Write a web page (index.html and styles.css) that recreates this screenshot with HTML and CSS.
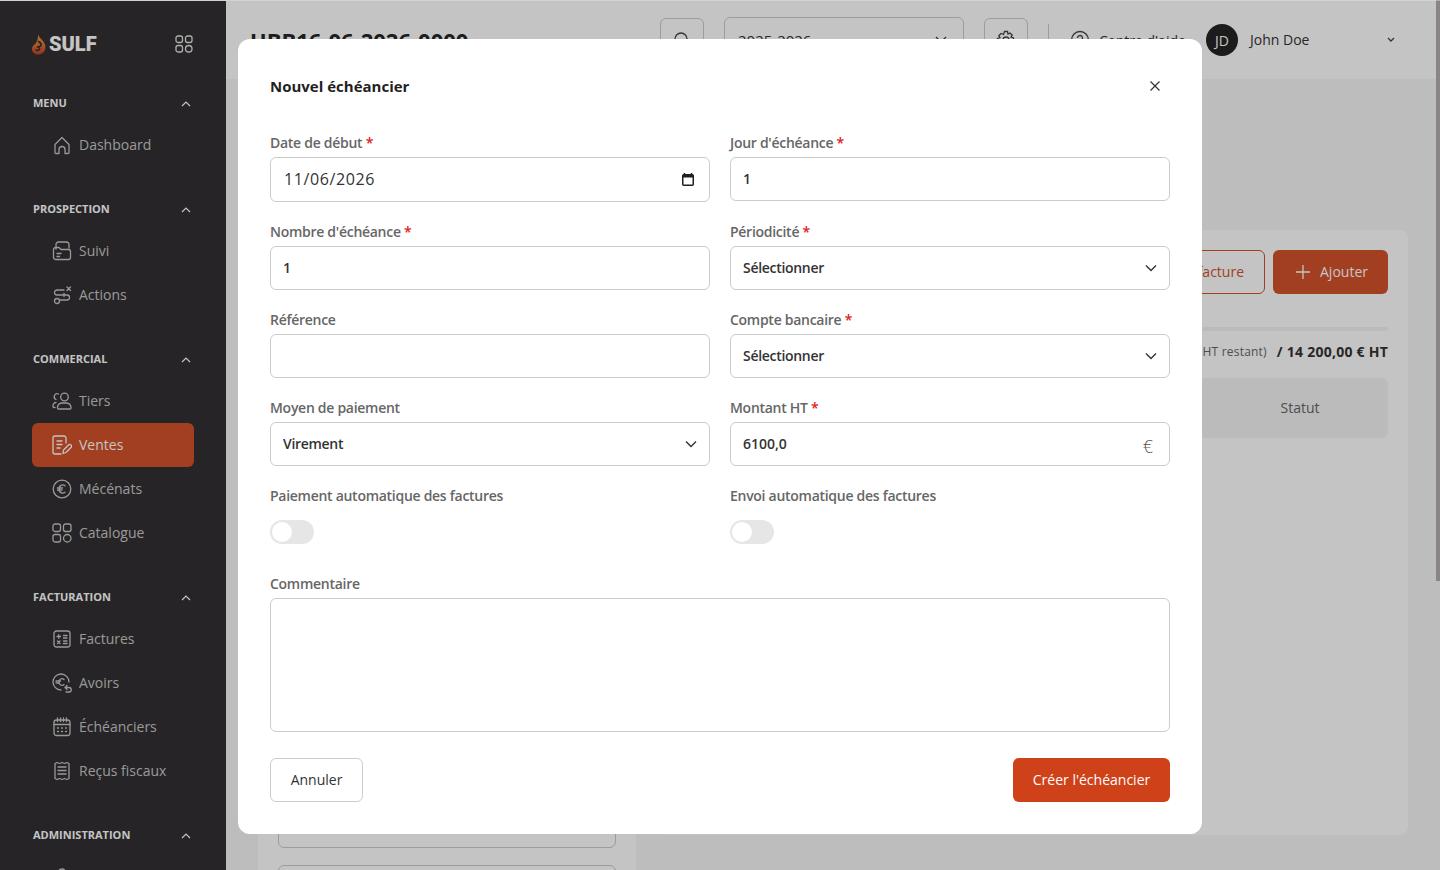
FILE: index.html
```html
<!DOCTYPE html>
<html lang="fr">
  <head>
    <meta charset="UTF-8" />
    <meta name="viewport" content="width=device-width, initial-scale=1.0" />
    <title>Nouvel échéancier</title>
    <link rel="stylesheet" href="styles.css">
  </head>
  <body>
    <div class="app">
      <aside class="sidebar">
        <div class="brand">
          <div class="logo">
            <svg width="15" height="21" viewBox="0 0 15 21">
              <defs>
                <linearGradient id="flame" x1="0" y1="0" x2="0" y2="1">
                  <stop offset="0" stop-color="#e09a3c" />
                  <stop offset="0.55" stop-color="#d9722f" />
                  <stop offset="1" stop-color="#c23f2b" />
                </linearGradient>
              </defs>
              <path d="M6 0c.5 3 3 4.500 5 7 2 2.500 3 5 2.200 8-.8 3.300-3.700 5.500-7 5.500-3.200 0-6.200-2-6.200-5.500 0-2 1-3.500 2.500-4.500C4.500 9 6.500 5 6 0z" fill="url(#flame)" />
              <path d="M6.500 7.500c2 1 3 2.500 2.500 4-.4 1.200-2 1-3 1.500 1.500.5 2 1.500 1.300 2.500-.6.800-2 1-3.300.6" fill="none" stroke="#323032" stroke-width="1.600" stroke-linecap="round" />
            </svg>
            <span>SULF</span>
          </div>
          <svg class="stroke-icon" width="18" height="18" viewBox="0 0 18 18">
            <rect x="1" y="1" width="6.500" height="6.500" rx="2" /><rect x="10.500" y="1" width="6.500" height="6.500" rx="2" />
            <rect x="1" y="10.500" width="6.500" height="6.500" rx="2" /><circle cx="13.750" cy="13.750" r="3.250" />
          </svg>
        </div>

        <div class="nav-section">
          <div class="nav-head"><span>MENU</span><svg class="caret" width="10" height="6" viewBox="0 0 10 6"><path d="M1 5l4-4 4 4" /></svg></div>
          <a class="nav-item"><svg class="stroke-icon" width="20" height="20" viewBox="0 0 20 20"><path d="M3 17.500v-8L10 2.500l7 7v8a1 1 0 0 1-1 1h-3v-4a3 3 0 0 0-6 0v4H4a1 1 0 0 1-1-1z" /></svg>Dashboard</a>
        </div>

        <div class="nav-section">
          <div class="nav-head"><span>PROSPECTION</span><svg class="caret" width="10" height="6" viewBox="0 0 10 6"><path d="M1 5l4-4 4 4" /></svg></div>
          <a class="nav-item"><svg class="stroke-icon" width="20" height="20" viewBox="0 0 20 20"><path d="M4 8V3.500A2.500 2.500 0 0 1 6.500 1h8A2.500 2.500 0 0 1 17 3.500V7M1.500 8.500A2 2 0 0 1 3.500 6.500H7l2 2h7.500a2 2 0 0 1 2 2v6a2 2 0 0 1-2 2h-13a2 2 0 0 1-2-2zM5 12.500h4M5 15.500h2.500" /></svg>Suivi</a>
          <a class="nav-item"><svg class="stroke-icon" width="20" height="20" viewBox="0 0 20 20"><path d="M12 5H5a2.500 2.500 0 0 0 0 5h10a2.500 2.500 0 0 1 0 5H8M15 2l3.500 3.500M18.500 2L15 5.500" /><circle cx="5" cy="16" r="2.500" /><path d="M12 8.500v3" /></svg>Actions</a>
        </div>

        <div class="nav-section">
          <div class="nav-head"><span>COMMERCIAL</span><svg class="caret" width="10" height="6" viewBox="0 0 10 6"><path d="M1 5l4-4 4 4" /></svg></div>
          <a class="nav-item"><svg class="stroke-icon" width="20" height="20" viewBox="0 0 20 20"><circle cx="12.500" cy="6" r="3.800" /><path d="M6.500 18a1 1 0 0 1-1-1v-1a5 5 0 0 1 5-4h4a5 5 0 0 1 4.500 4v1a1 1 0 0 1-1 1z" /><path d="M6.500 3a3 3 0 0 0-2.500 5.500M4 11.500a3 3 0 0 0-3 3v1a1 1 0 0 0 1 1h1" /></svg>Tiers</a>
          <a class="nav-item active"><svg class="stroke-icon" width="20" height="20" viewBox="0 0 20 20"><path d="M14 8V3a2 2 0 0 0-2-2H3a2 2 0 0 0-2 2v14a2 2 0 0 0 2 2h6M5 6h5M5 9.500h5M5 13h3" /><path d="M11 18.500l.5-3.500 5-5a1.500 1.500 0 0 1 2.500 2.500l-5 5z" /></svg>Ventes</a>
          <a class="nav-item"><svg class="stroke-icon" width="20" height="20" viewBox="0 0 20 20"><circle cx="10" cy="10" r="8.800" /><path d="M13 6.800a3.500 3.500 0 0 0-5.800 3.200 3.500 3.500 0 0 0 5.800 3.200M5.500 9h5M5.500 11h4.500" /></svg>Mécénats</a>
          <a class="nav-item"><svg class="stroke-icon" width="20" height="20" viewBox="0 0 20 20"><rect x="1" y="1" width="7.500" height="7.500" rx="2" /><rect x="11.500" y="1" width="7.500" height="7.500" rx="2" /><rect x="1" y="11.500" width="7.500" height="7.500" rx="2" /><circle cx="15.250" cy="15.250" r="3.750" /></svg>Catalogue</a>
        </div>

        <div class="nav-section">
          <div class="nav-head"><span>FACTURATION</span><svg class="caret" width="10" height="6" viewBox="0 0 10 6"><path d="M1 5l4-4 4 4" /></svg></div>
          <a class="nav-item"><svg class="stroke-icon" width="20" height="20" viewBox="0 0 20 20"><rect x="2" y="2" width="16" height="16" rx="2.500" /><path d="M5 7.500h3.500M6.750 5.750v3.500M11.500 6.500h3.500M11.500 9h3.500M5.500 12l2.500 2.500M8 12l-2.500 2.500M11.500 12h3.500M11.500 14.500h3.500" /></svg>Factures</a>
          <a class="nav-item"><svg class="stroke-icon" width="20" height="20" viewBox="0 0 20 20"><path d="M17 9a8 8 0 1 0-8 8M12 6.500a3 3 0 0 0-5 2.500 3 3 0 0 0 5 2.500M4 8h4.500M4 10h3.500M15 12.500l-2 2 2 2M13 14.500h4a2 2 0 0 1 0 4.500h-3" /></svg>Avoirs</a>
          <a class="nav-item"><svg class="stroke-icon" width="20" height="20" viewBox="0 0 20 20"><rect x="2" y="3" width="16" height="15.500" rx="2.500" /><path d="M2 7.500h16M5.500 1v3.500M8.500 1v3.500M11.500 1v3.500M14.500 1v3.500M5.500 11h1M9.500 11h1M13.500 11h1M5.500 14.500h1M9.500 14.500h1M13.500 14.500h1" /></svg>Échéanciers</a>
          <a class="nav-item"><svg class="stroke-icon" width="20" height="20" viewBox="0 0 20 20"><path d="M3 2.500l2 -1 2.500 1 2.500-1 2.500 1 2.500-1 2 1v15l-2 1-2.500-1-2.500 1-2.500-1-2.500 1-2-1zM6 6h8M6 9.500h8M6 13h8" /></svg>Reçus fiscaux</a>
        </div>

        <div class="nav-section">
          <div class="nav-head"><span>ADMINISTRATION</span><svg class="caret" width="10" height="6" viewBox="0 0 10 6"><path d="M1 5l4-4 4 4" /></svg></div>
          <a class="nav-item"><svg class="stroke-icon" width="20" height="20" viewBox="0 0 20 20"><circle cx="10" cy="6" r="4" /><path d="M3 18a7 7 0 0 1 14 0" /></svg></a>
        </div>
      </aside>

      <div class="content">
        <header class="topbar">
          <h1>UBB16-06-2026-0000</h1>
          <div class="topbar-right">
            <button class="icon-button"><svg class="dark-icon" width="18" height="18" viewBox="0 0 18 18"><circle cx="8" cy="8" r="6" /><path d="M13 13l4 4" /></svg></button>
            <div class="year-select"><span>2025-2026</span><svg class="dark-icon" width="12" height="8" viewBox="0 0 12 8"><path d="M1 1l5 5 5-5" /></svg></div>
            <button class="icon-button"><svg class="dark-icon" width="20" height="20" viewBox="0 0 20 20"><circle cx="10" cy="10" r="3" /><path d="M8.500 1.500h3l.5 2.500 2-1 2.200 2.200-1.200 2 2.500.8v3l-2.500.8 1.200 2-2.200 2.200-2-1-.5 2.500h-3l-.5-2.500-2 1-2.200-2.200 1.200-2L1.500 11.500v-3L4 7.700l-1.200-2L5 3.500l2.500 1z" /></svg></button>
            <div class="separator"></div>
            <div class="help"><svg class="dark-icon" width="20" height="20" viewBox="0 0 20 20"><circle cx="10" cy="10" r="8.500" /><path d="M7.500 8a2.500 2.500 0 1 1 3.500 2.300c-.7.3-1 .7-1 1.700M10 14.500v.5" /></svg>Centre d'aide</div>
            <div class="user">
              <span class="avatar">JD</span>
              <span class="user-name">John Doe</span>
              <svg class="dark-icon" width="8" height="6" viewBox="0 0 8 6"><path d="M1 1l3 3 3-3" /></svg>
            </div>
          </div>
        </header>

        <main class="page">
          <section class="side-panel">
            <div class="ghost-input"></div>
            <div class="ghost-input"></div>
          </section>
          <section class="schedule-panel">
            <div class="schedule-actions">
              <button class="btn-outline">Générer la facture</button>
              <button class="btn-fill"><svg width="16" height="16" viewBox="0 0 16 16"><path d="M8 1v14M1 8h14" /></svg>Ajouter</button>
            </div>
            <div class="progress"></div>
            <div class="totals"><span class="rest">(8 100,00 € HT restant)</span><strong>/ 14 200,00 € HT</strong></div>
            <div class="table-head"><span>Échéance</span><span>Montant HT</span><span>Statut</span></div>
          </section>
        </main>
      </div>
    </div>

    <div class="scrollbar"></div>
    <div class="backdrop"></div>

    <form class="modal">
      <div class="modal-head">
        <h2>Nouvel échéancier</h2>
        <svg class="close" width="10" height="10" viewBox="0 0 10 10"><path d="M.5.500l9 9M9.500.500l-9 9" /></svg>
      </div>

      <div class="form-grid">
        <div class="field">
          <label>Date de début <i>*</i></label>
          <div class="control">
            <input class="date-input" type="text" value="11/06/2026" />
            <svg class="date-icon" width="12" height="13" viewBox="0 0 12 13"><path d="M2.500 0v2M9.500 0v2" stroke="#1f1f1f" stroke-width="1.500" /><rect x=".75" y="1.750" width="10.500" height="10.500" rx="1" fill="none" stroke="#1f1f1f" stroke-width="1.500" /><path d="M.5 2h11v2.500H.5z" fill="#1f1f1f" /></svg>
          </div>
        </div>
        <div class="field">
          <label>Jour d'échéance <i>*</i></label>
          <input type="text" value="1" />
        </div>

        <div class="field">
          <label>Nombre d'échéance <i>*</i></label>
          <input type="text" value="1" />
        </div>
        <div class="field">
          <label>Périodicité <i>*</i></label>
          <div class="control">
            <select><option>Sélectionner</option></select>
            <svg class="select-caret" width="12" height="8" viewBox="0 0 12 8"><path d="M1 1.500l5 5 5-5" /></svg>
          </div>
        </div>

        <div class="field">
          <label>Référence</label>
          <input type="text" />
        </div>
        <div class="field">
          <label>Compte bancaire <i>*</i></label>
          <div class="control">
            <select><option>Sélectionner</option></select>
            <svg class="select-caret" width="12" height="8" viewBox="0 0 12 8"><path d="M1 1.500l5 5 5-5" /></svg>
          </div>
        </div>

        <div class="field">
          <label>Moyen de paiement</label>
          <div class="control">
            <select><option>Virement</option></select>
            <svg class="select-caret" width="12" height="8" viewBox="0 0 12 8"><path d="M1 1.500l5 5 5-5" /></svg>
          </div>
        </div>
        <div class="field">
          <label>Montant HT <i>*</i></label>
          <div class="control">
            <input type="text" value="6100,0" />
            <span class="suffix">€</span>
          </div>
        </div>

        <div class="field">
          <label>Paiement automatique des factures</label>
          <span class="toggle"><span class="knob"></span></span>
        </div>
        <div class="field">
          <label>Envoi automatique des factures</label>
          <span class="toggle"><span class="knob"></span></span>
        </div>

        <div class="field field-wide">
          <label>Commentaire</label>
          <textarea></textarea>
        </div>
      </div>

      <div class="modal-foot">
        <button type="button" class="btn-cancel">Annuler</button>
        <button type="button" class="btn-submit">Créer l'échéancier</button>
      </div>
    </form>
  </body>
</html>
```

FILE: styles.css
```css
* {
  box-sizing: border-box;
}

html,
body {
  height: 100%;
  margin: 0;
  overflow: hidden;
}

body {
  font-family: "Open Sans", "Noto Sans", sans-serif;
  font-size: 14px;
  color: #333;
  background: #d2d2da;
}

button,
input,
select,
textarea {
  font-family: inherit;
}

.app {
  display: flex;
  height: 870px;
  padding-top: 1px;
}

/* Sidebar */
.sidebar {
  width: 226px;
  flex-shrink: 0;
  background-color: #323032;
  color: #c8c8c8;
  padding: 0 32px;
  overflow: hidden;
}

.brand {
  height: 86px;
  margin-bottom: 6px;
  display: flex;
  justify-content: space-between;
  align-items: center;
}

.logo {
  display: flex;
  align-items: center;
  gap: 2px;
  font-family: "Roboto", sans-serif;
  font-size: 20px;
  font-weight: 900;
  color: #fff;
}

.stroke-icon {
  flex-shrink: 0;
  fill: none;
  stroke: currentColor;
  stroke-width: 1.300;
  stroke-linecap: round;
  stroke-linejoin: round;
}

.brand .stroke-icon {
  color: #e6e6e6;
  margin-right: 1px;
}

.nav-section {
  margin-bottom: 32px;
}

.nav-head {
  height: 20px;
  margin-bottom: 10px;
  display: flex;
  justify-content: space-between;
  align-items: center;
  padding: 0 3px 2px 1px;
  font-size: 11px;
  font-weight: 700;
  color: #fff;
}

.caret {
  margin-top: 4px;
  fill: none;
  stroke: #fff;
  stroke-width: 1.200;
}

.nav-item {
  height: 44px;
  display: flex;
  align-items: center;
  gap: 7px;
  padding: 0 0 2px 20px;
  border-radius: 6px;
  font-size: 14px;
}

.nav-item svg {
  margin-top: 2px;
}

.nav-item.active {
  background-color: #d4522c;
  color: #fff;
}

/* Page behind the dialog */
.content {
  flex: 1;
  min-width: 0;
  background-color: #f6f6f6;
  padding-right: 4px;
}

.topbar {
  height: 78px;
  background-color: #fff;
  display: flex;
  justify-content: space-between;
  align-items: center;
  padding: 0 32px 0 24px;
}

.topbar h1 {
  margin: 0;
  font-size: 22px;
  font-weight: 700;
  color: #262626;
}

.topbar-right {
  display: flex;
  align-items: center;
}

.icon-button {
  width: 44px;
  height: 44px;
  background: none;
  border: 1px solid #ccc;
  border-radius: 6px;
  display: flex;
  align-items: center;
  justify-content: center;
}

.dark-icon {
  fill: none;
  stroke: #444;
  stroke-width: 1.300;
}

.year-select {
  width: 240px;
  height: 46px;
  margin: 0 20px;
  padding: 0 16px 0 13px;
  border: 1px solid #ccc;
  border-radius: 6px;
  display: flex;
  justify-content: space-between;
  align-items: center;
  font-size: 15px;
}

.separator {
  width: 1px;
  height: 32px;
  margin: 0 20px;
  background-color: #ccc;
}

.help {
  display: flex;
  align-items: center;
  gap: 9px;
  margin-left: 1px;
  width: 136px;
}

.user {
  display: flex;
  align-items: center;
  width: 198px;
  padding-right: 9px;
}

.avatar {
  width: 32px;
  height: 32px;
  border-radius: 50%;
  background-color: #262526;
  color: #fff;
  font-size: 14px;
  display: flex;
  align-items: center;
  justify-content: center;
}

.user-name {
  flex: 1;
  margin-left: 12px;
  padding-bottom: 2px;
  color: #333;
}

.page {
  display: flex;
  gap: 20px;
  padding: 151px 28px 0 32px;
  height: 792px;
  overflow: hidden;
}

.side-panel {
  width: 378px;
  flex-shrink: 0;
  height: 700px;
  background-color: #fff;
  padding: 574px 20px 0;
  display: flex;
  flex-direction: column;
  gap: 17px;
  border-radius: 8px;
}

.ghost-input {
  height: 44px;
  flex-shrink: 0;
  border: 1px solid #ccc;
  border-radius: 6px;
}

.schedule-panel {
  flex: 1;
  height: 605px;
  background-color: #fff;
  border-radius: 8px;
  padding: 20px;
}

.schedule-actions {
  display: flex;
  justify-content: flex-end;
  gap: 8px;
}

.btn-outline,
.btn-fill {
  height: 44px;
  border-radius: 6px;
  font-size: 14px;
  padding: 0 20px 2px;
}

.btn-outline {
  background: none;
  border: 1px solid #d4522c;
  color: #d4522c;
}

.btn-fill {
  width: 115px;
  padding-left: 22px;
  background-color: #d4522c;
  border: none;
  color: #fff;
  display: flex;
  align-items: center;
  gap: 9px;
}

.btn-fill svg {
  margin-top: 2px;
  fill: none;
  stroke: #fff;
  stroke-width: 1.300;
}

.progress {
  height: 4px;
  margin-top: 33px;
  background-color: #f4f4f4;
  border-radius: 2px;
}

.totals {
  display: flex;
  justify-content: flex-end;
  align-items: center;
  gap: 10px;
  height: 20px;
  margin-top: 10px;
}

.rest {
  font-size: 12px;
  letter-spacing: 0.2px;
  color: #666;
}

.totals strong {
  font-size: 14px;
  letter-spacing: 0.25px;
  color: #333;
}

.table-head {
  height: 60px;
  margin-top: 17px;
  padding-bottom: 2px;
  background-color: #f4f4f4;
  border-radius: 6px;
  display: flex;
  justify-content: flex-end;
  align-items: center;
  color: #666;
}

.table-head span {
  width: 176px;
  text-align: center;
}

.scrollbar {
  position: fixed;
  top: 0;
  right: 0;
  width: 4px;
  height: 581px;
  background-color: #b3adad;
}

.backdrop {
  position: fixed;
  inset: 1px 0 0;
  background-color: rgba(0, 0, 0, 0.23);
}

/* Dialog */
.modal {
  position: fixed;
  top: 39px;
  left: 238px;
  width: 964px;
  height: 795px;
  background-color: #fff;
  border-radius: 12px;
  padding: 32px;
}

.modal-head {
  height: 30px;
  margin-bottom: 32px;
  display: flex;
  justify-content: space-between;
  align-items: center;
  padding-right: 10px;
}

.modal-head h2 {
  margin: 0;
  font-size: 15px;
  font-weight: 700;
  color: #1f1f1f;
}

.close {
  fill: none;
  stroke: #333;
  stroke-width: 1.200;
}

.form-grid {
  display: grid;
  grid-template-columns: 440px 440px;
  column-gap: 20px;
  row-gap: 20px;
  align-items: start;
}

.field-wide {
  grid-column: 1 / 3;
}

.field label {
  display: block;
  height: 20px;
  line-height: 20px;
  margin-bottom: 4px;
  font-size: 14px;
  font-weight: 600;
  letter-spacing: -0.28px;
  color: #666;
}

.field label i {
  font-style: normal;
  color: #e02020;
}

.control {
  position: relative;
}

input,
select,
textarea {
  display: block;
  width: 100%;
  height: 44px;
  background-color: #fff;
  border: 1px solid #ccc;
  border-radius: 6px;
  padding: 0 12px 2px;
  font-size: 14px;
  font-weight: 600;
  color: #333;
  outline: none;
}

select {
  appearance: none;
  letter-spacing: -0.3px;
}

.date-input {
  height: 45px;
  padding: 0 13px 2px;
  font-size: 16px;
  font-weight: 500;
  letter-spacing: 0.6px;
}

.date-icon {
  position: absolute;
  top: 16px;
  right: 16px;
}

.select-caret {
  position: absolute;
  top: 18px;
  right: 13px;
  fill: none;
  stroke: #333;
  stroke-width: 1.400;
}

.suffix {
  position: absolute;
  top: 14px;
  right: 17px;
  font-size: 18px;
  font-weight: 300;
  line-height: 20px;
  color: #555;
}

.toggle {
  display: block;
  width: 44px;
  height: 24px;
  margin: 14px 0 10px;
  padding: 2px;
  background-color: #e6e6e6;
  border-radius: 12px;
}

.knob {
  display: block;
  width: 20px;
  height: 20px;
  background-color: #fff;
  border-radius: 50%;
}

textarea {
  height: 134px;
  resize: none;
}

.modal-foot {
  display: flex;
  justify-content: space-between;
  margin-top: 26px;
}

.modal-foot button {
  height: 44px;
  padding-bottom: 2px;
  border-radius: 6px;
  font-size: 14px;
  font-weight: 500;
}

.btn-cancel {
  width: 93px;
  background: #fff;
  border: 1px solid #ccc;
  color: #333;
}

.btn-submit {
  width: 157px;
  background-color: #cf4119;
  border: none;
  color: #fff;
}
```
